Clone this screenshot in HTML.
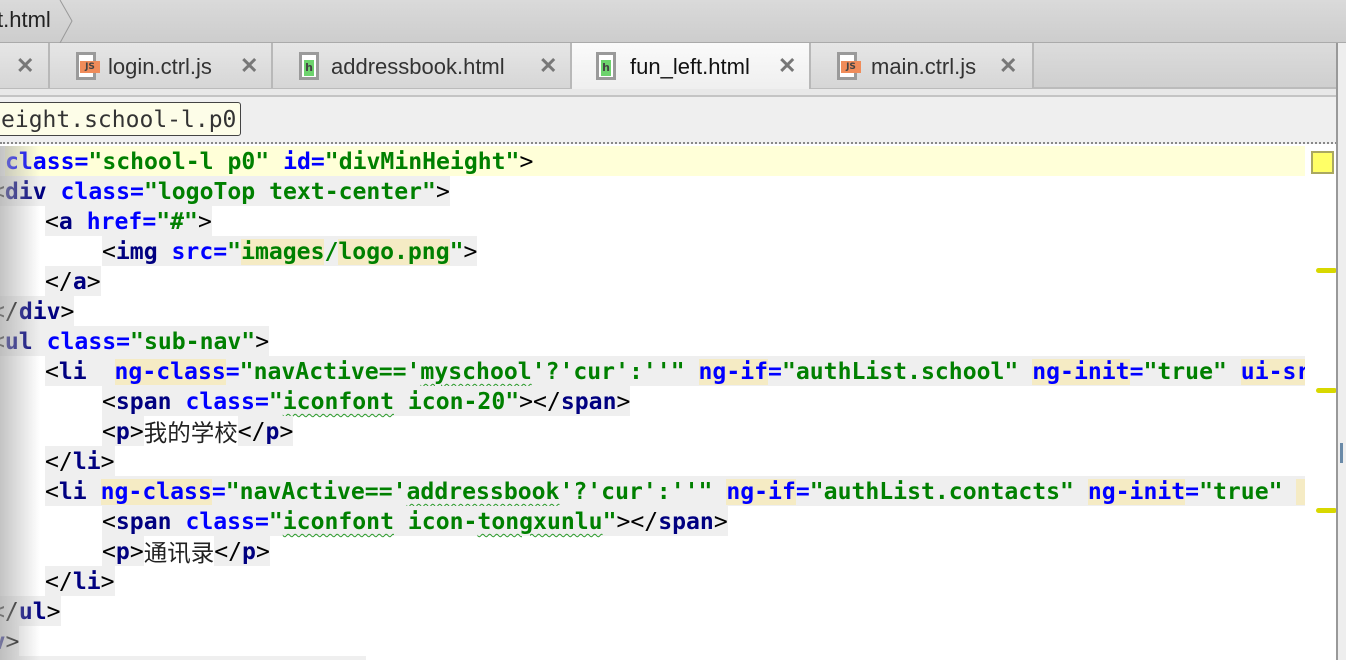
<!DOCTYPE html>
<html><head><meta charset="utf-8"><style>
*{margin:0;padding:0;box-sizing:border-box}
html,body{width:1346px;height:660px;overflow:hidden}
body{background:#fff;position:relative;font-family:"Liberation Sans",sans-serif}
#top{position:absolute;left:0;top:0;width:1346px;height:43px;background:linear-gradient(#dadada,#cdcdcd);border-bottom:1px solid #aaa}
#top .t{position:absolute;left:-3px;top:7px;font-size:22px;color:#222}
#tabs{position:absolute;left:0;top:43px;width:1337px;height:46px;background:linear-gradient(#dcdcdc,#cfcfcf);border-bottom:2px solid #bbb}
.tab{position:absolute;top:0;height:45px;border-right:2px solid #b8b8b8;background:linear-gradient(#e6e6e6,#d6d6d6);font-size:22px;color:#333}
.tab.act{background:linear-gradient(#fafafa,#efefef);height:46px}
.tab .n{position:absolute;top:11px}
.tab .x{position:absolute;top:10px;font-size:22px;color:#777;font-weight:bold}
.ic{position:absolute;top:9px;width:20px;height:28px;border:3px solid #9a9a9a;background:#fff}
.ic b{position:absolute;left:3px;top:6px;width:17px;height:12px;font:bold 9px "DejaVu Sans";line-height:12px;color:#444;text-align:center}
.ic.js b{background:#f08c5a;left:1px;width:20px}
.ic.h b{background:#6dd36d;width:10px;left:2px;height:16px;top:5px;line-height:16px;font-size:11px}
#strip{position:absolute;left:0;top:89px;width:1337px;height:8px;background:#e8e8e8;border-bottom:2px solid #c4c4c4}
#crumb{position:absolute;left:0;top:97px;width:1337px;height:47px;background:#efefef;border-bottom:2px dotted #888}
#crumb .b{position:absolute;left:-8px;top:5px;height:34px;padding:0 4px 0 8px;border:1.5px solid #444;border-radius:3px;background:#fdfde8;font:23px/34px "DejaVu Sans Mono",monospace;color:#333}
#right{position:absolute;left:1336px;top:43px;width:10px;height:617px;background:#eee;border-left:2px solid #999}
.ln{position:absolute;height:30px;font:bold 23.1px/32px "DejaVu Sans Mono",monospace;white-space:pre;background:#efefef}
.g{color:#008000}.a{color:#0000ff}.t2{color:#000080}.p{color:#000;font-weight:normal}
.y{background:#f5ebc4}
.w{text-decoration:underline wavy #2a9a2a;text-decoration-thickness:1px;text-underline-offset:4px}
.c{display:inline-block;font:23.5px/30px "Noto Sans CJK SC",sans-serif;color:#222;background:#fff;vertical-align:top}
.mk{position:absolute;left:1316px;width:21px;height:5px;border-radius:3px;background:#d8d800}
#shade{position:absolute;left:0;top:146px;width:40px;height:514px;background:linear-gradient(90deg,rgba(170,170,170,.7),rgba(255,255,255,0))}
</style></head><body>
<div id="top"><span class="t">t.html</span><svg style="position:absolute;left:58px;top:0" width="18" height="43"><path d="M2 0 L14 21 L2 43" stroke="#999" fill="none"/></svg></div>
<div id="tabs">
<div class="tab" style="left:-10px;width:60px"><span class="n" style="left:6px">l</span><span class="x" style="left:26px">✕</span></div>
<div class="tab" style="left:50px;width:223px"><div class="ic js" style="left:26px"><b>JS</b></div><span class="n" style="left:58px">login.ctrl.js</span><span class="x" style="left:190px">✕</span></div>
<div class="tab" style="left:273px;width:299px"><div class="ic h" style="left:26px"><b>h</b></div><span class="n" style="left:58px">addressbook.html</span><span class="x" style="left:266px">✕</span></div>
<div class="tab act" style="left:572px;width:239px"><div class="ic h" style="left:24px"><b>h</b></div><span class="n" style="left:58px;color:#111">fun_left.html</span><span class="x" style="left:206px">✕</span></div>
<div class="tab" style="left:811px;width:223px"><div class="ic js" style="left:26px"><b>JS</b></div><span class="n" style="left:60px">main.ctrl.js</span><span class="x" style="left:188px">✕</span></div>
</div>
<div id="strip"></div>
<div id="crumb"><span class="b">eight.school-l.p0</span></div>

<div class="ln" style="top:146px;left:5px;width:1300px;background:#ffffd8"><span class="a">class=</span><span class="g">"school-l p0"</span> <span class="a">id=</span><span class="g">"divMinHeight"</span><span class="p">&gt;</span></div>
<div class="ln" style="top:176px;left:-9px"><span class="p">&lt;</span><span class="t2">div</span> <span class="a">class=</span><span class="g">"logoTop text-center"</span><span class="p">&gt;</span></div>
<div class="ln" style="top:206px;left:45px"><span class="p">&lt;</span><span class="t2">a</span> <span class="a">href=</span><span class="g">"#"</span><span class="p">&gt;</span></div>
<div class="ln" style="top:236px;left:102px"><span class="p">&lt;</span><span class="t2">img</span> <span class="a">src=</span><span class="g">"<span class="y">images</span>/<span class="y">logo.png</span>"</span><span class="p">&gt;</span></div>
<div class="ln" style="top:266px;left:45px"><span class="p">&lt;/</span><span class="t2">a</span><span class="p">&gt;</span></div>
<div class="ln" style="top:296px;left:-9px"><span class="p">&lt;/</span><span class="t2">div</span><span class="p">&gt;</span></div>
<div class="ln" style="top:326px;left:-9px"><span class="p">&lt;</span><span class="t2">ul</span> <span class="a">class=</span><span class="g">"sub-nav"</span><span class="p">&gt;</span></div>
<div class="ln" style="top:356px;left:45px;width:1260px;overflow:hidden"><span class="p">&lt;</span><span class="t2">li</span>  <span class="a y">ng-class</span><span class="a">=</span><span class="g">"navActive=='<span class="w">myschool</span>'?'cur':''"</span> <span class="a y">ng-if</span><span class="a">=</span><span class="g">"authList.school"</span> <span class="a y">ng-init</span><span class="a">=</span><span class="g">"true"</span> <span class="a y">ui-sref</span></div>
<div class="ln" style="top:386px;left:102px"><span class="p">&lt;</span><span class="t2">span</span> <span class="a">class=</span><span class="g">"<span class="w">iconfont</span> icon-20"</span><span class="p">&gt;&lt;/</span><span class="t2">span</span><span class="p">&gt;</span></div>
<div class="ln" style="top:416px;left:102px"><span class="p">&lt;</span><span class="t2">p</span><span class="p">&gt;</span><span class="c">我的学校</span><span class="p">&lt;/</span><span class="t2">p</span><span class="p">&gt;</span></div>
<div class="ln" style="top:446px;left:45px"><span class="p">&lt;/</span><span class="t2">li</span><span class="p">&gt;</span></div>
<div class="ln" style="top:476px;left:45px;width:1260px;overflow:hidden"><span class="p">&lt;</span><span class="t2">li</span> <span class="a y">ng-class</span><span class="a">=</span><span class="g">"navActive=='<span class="w">addressbook</span>'?'cur':''"</span> <span class="a y">ng-if</span><span class="a">=</span><span class="g">"authList.contacts"</span> <span class="a y">ng-init</span><span class="a">=</span><span class="g">"true"</span> <span class="y">  </span></div>
<div class="ln" style="top:506px;left:102px"><span class="p">&lt;</span><span class="t2">span</span> <span class="a">class=</span><span class="g">"<span class="w">iconfont</span> icon-<span class="w">tongxunlu</span>"</span><span class="p">&gt;&lt;/</span><span class="t2">span</span><span class="p">&gt;</span></div>
<div class="ln" style="top:536px;left:102px"><span class="p">&lt;</span><span class="t2">p</span><span class="p">&gt;</span><span class="c">通讯录</span><span class="p">&lt;/</span><span class="t2">p</span><span class="p">&gt;</span></div>
<div class="ln" style="top:566px;left:45px"><span class="p">&lt;/</span><span class="t2">li</span><span class="p">&gt;</span></div>
<div class="ln" style="top:596px;left:-9px"><span class="p">&lt;/</span><span class="t2">ul</span><span class="p">&gt;</span></div>
<div class="ln" style="top:626px;left:-64px"><span class="p">&lt;/</span><span class="t2">div</span><span class="p">&gt;</span></div>
<div class="ln" style="top:656px;left:0;width:366px;height:4px"></div>
<div id="shade"></div>

<div style="position:absolute;left:1311px;top:151px;width:23px;height:23px;background:#ffff66;border:2px solid #aaa860"></div>
<div class="mk" style="top:268px"></div>
<div class="mk" style="top:388px"></div>
<div class="mk" style="top:508px"></div>
<div id="right"><div style="position:absolute;left:2px;top:400px;width:3px;height:20px;background:#6a8aa8"></div></div>
</body></html>
